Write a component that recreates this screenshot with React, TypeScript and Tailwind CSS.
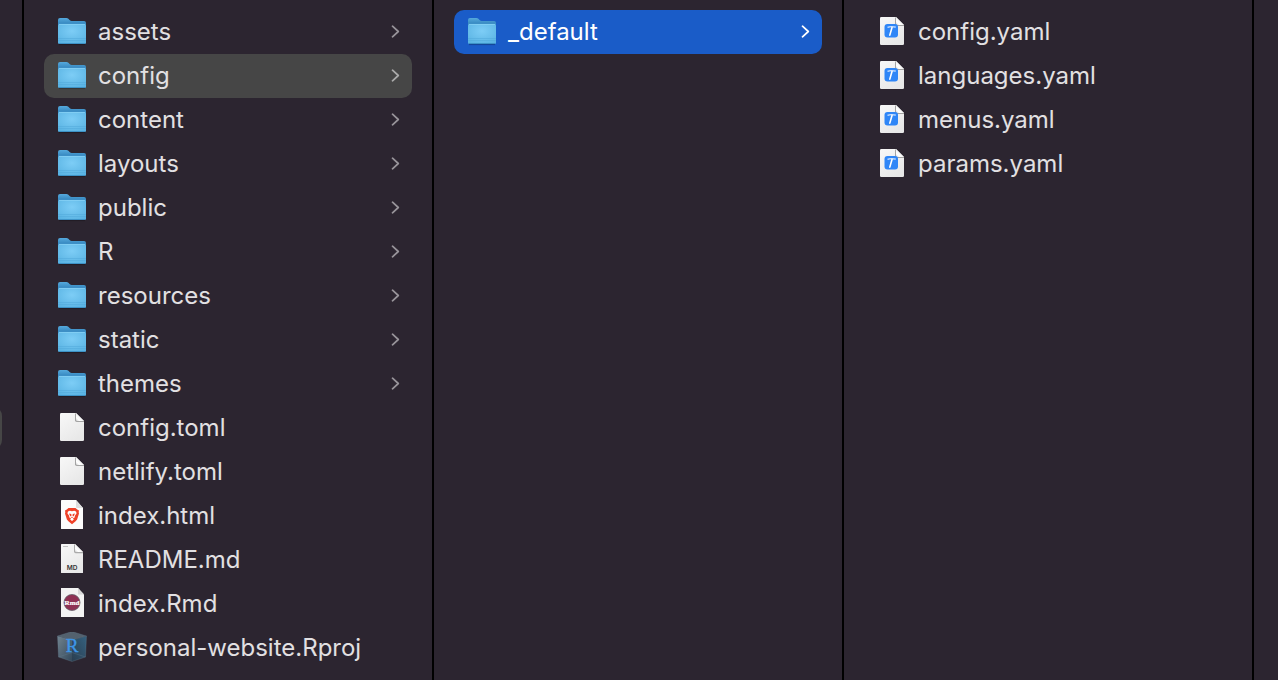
import React from "react";

type Kind = "folder" | "doc" | "brave" | "md" | "rmd" | "rproj" | "yaml";
type Entry = { name: string; kind: Kind };
type State = "none" | "path" | "active";

const root: Entry[] = [
  { name: "assets", kind: "folder" },
  { name: "config", kind: "folder" },
  { name: "content", kind: "folder" },
  { name: "layouts", kind: "folder" },
  { name: "public", kind: "folder" },
  { name: "R", kind: "folder" },
  { name: "resources", kind: "folder" },
  { name: "static", kind: "folder" },
  { name: "themes", kind: "folder" },
  { name: "config.toml", kind: "doc" },
  { name: "netlify.toml", kind: "doc" },
  { name: "index.html", kind: "brave" },
  { name: "README.md", kind: "md" },
  { name: "index.Rmd", kind: "rmd" },
  { name: "personal-website.Rproj", kind: "rproj" },
];

const configDir: Entry[] = [{ name: "_default", kind: "folder" }];

const defaultDir: Entry[] = [
  { name: "config.yaml", kind: "yaml" },
  { name: "languages.yaml", kind: "yaml" },
  { name: "menus.yaml", kind: "yaml" },
  { name: "params.yaml", kind: "yaml" },
];

function Gradients() {
  return (
    <svg className="absolute size-0" aria-hidden="true">
      <defs>
        <radialGradient id="folderFront" cx="0.5" cy="0.35" r="0.75">
          <stop offset="0" stopColor="#7dcdf6" />
          <stop offset="1" stopColor="#58b2e2" />
        </radialGradient>
        <linearGradient id="folderBack" x1="0" y1="0" x2="0" y2="1">
          <stop offset="0" stopColor="#55a9dc" />
          <stop offset="0.3" stopColor="#3d8fc6" />
        </linearGradient>
        <linearGradient id="paper" x1="0" y1="0" x2="0.6" y2="1">
          <stop offset="0" stopColor="#f8f8f8" />
          <stop offset="1" stopColor="#e8e8e8" />
        </linearGradient>
        <linearGradient id="fold" x1="0" y1="1" x2="0.5" y2="0.5">
          <stop offset="0" stopColor="#cfcfcf" />
          <stop offset="0.5" stopColor="#ffffff" />
          <stop offset="1" stopColor="#f4f4f4" />
        </linearGradient>
        <linearGradient id="cubeLeft" x1="0" y1="0" x2="1" y2="1">
          <stop offset="0" stopColor="#71838f" />
          <stop offset="1" stopColor="#33485a" />
        </linearGradient>
        <linearGradient id="cubeRight" x1="1" y1="0" x2="0" y2="1">
          <stop offset="0" stopColor="#35617f" />
          <stop offset="1" stopColor="#2a3e50" />
        </linearGradient>
      </defs>
    </svg>
  );
}

function Folder() {
  return (
    <>
      <path d="M3 28.6h26" stroke="#000" strokeOpacity="0.25" />
      <path d="M2 4Q2 2 4 2h6.4q1.2 0 2 .8l1.2 1.2q1 1 2 1H28q2 0 2 2v10H2z" fill="url(#folderBack)" />
      <path d="M2 9.6Q2 8 3.6 8h24.8Q30 8 30 9.6v16.9Q30 28 28.5 28h-25Q2 28 2 26.5z" fill="url(#folderFront)" />
      <path d="M3 8.5h26" stroke="#8fd7f8" strokeOpacity="0.6" />
      <path d="M2 22.5h28M2 24.5h28" stroke="#4fa8da" strokeOpacity="0.5" />
      <path d="M3 27.5h26" stroke="#3d92c6" />
    </>
  );
}

function Sheet({ narrow = false }: { narrow?: boolean }) {
  return narrow ? (
    <>
      <path d="M5 .6Q5 0 5.6 0H19l8 8v20.4q0 .6-.6.6H5.6Q5 29 5 28.4z" fill="url(#paper)" />
      <path d="M18 1v6.5Q18 9.2 19.7 9.2H27v-1L19 0z" fill="#7c7c7c" fillOpacity="0.6" />
      <path d="M19 0v7q0 1 1 1h7z" fill="url(#fold)" />
    </>
  ) : (
    <>
      <path d="M4 2.3Q4 1 5.3 1H20l8 8v18.7q0 1.3-1.3 1.3H5.3Q4 29 4 27.7z" fill="url(#paper)" />
      <path d="M19 2v6.2Q19 10 20.8 10H28V9l-8-8z" fill="#707070" fillOpacity="0.6" />
      <path d="M20 1v6.8Q20 9 21.2 9H28z" fill="url(#fold)" />
    </>
  );
}

function Brave() {
  return (
    <>
      <path d="M5 .6Q5 0 5.6 0H20l7 8v20.4q0 .6-.6.6H5.6Q5 29 5 28.4z" fill="#fcfcfc" />
      <path d="M20 0v7q0 1 1 1h6z" fill="#dedede" />
      <path d="M12.5 8h7l1.700 1.500 1.800 1-.3 1.800.3 1.300-1.900 6-1.500 1.700L16 24.300l-3.600-3-1.500-1.700-1.900-6 .3-1.300-.3-1.800 1.800-1z" fill="#ee4128" />
      <path d="M12 11.500l1.800-.8 2.200.6 2.200-.6 1.800.8.600 1.700-1.900 2.800.2 1.200-1.900 1.100.8 1.200L16 21l-1.800-1.500.8-1.200-1.900-1.100.2-1.200-1.900-2.800z" fill="#fff" />
      <path d="M13 13.500l2.300.5.2 2.200-1.200.1zM19 13.500l-2.300.5-.2 2.200 1.200.1zM14.700 17h2.600L16 18z" fill="#ee4128" />
    </>
  );
}

function Art({ kind }: { kind: Kind }) {
  switch (kind) {
    case "folder":
      return <Folder />;
    case "doc":
      return <Sheet />;
    case "brave":
      return <Brave />;
    case "md":
      return (
        <>
          <Sheet narrow />
          <path d="M7 2.5h5" stroke="#b5b5b5" strokeWidth="0.8" />
          <text x="16" y="26" textAnchor="middle" fontSize="6.5" fontWeight="600" fill="#333" fontFamily="Inter, sans-serif">MD</text>
        </>
      );
    case "rmd":
      return (
        <>
          <path d="M5 0h17l6 6.5V29H5z" fill="#f3f3f3" />
          <path d="M22 0v6.5h6z" fill="#d8d8d8" />
          <circle cx="16" cy="14.5" r="8" fill="#8f3154" stroke="#63606a" strokeWidth="0.8" />
          <text x="16" y="17" textAnchor="middle" fontSize="7" fontWeight="700" fill="#fff" stroke="#fff" strokeWidth="0.2" fontFamily="Liberation Serif, serif">Rmd</text>
        </>
      );
    case "rproj":
      return (
        <>
          <path d="M1.5 4L16 8v21.5L2.5 25z" fill="url(#cubeLeft)" />
          <path d="M30.5 4L16 8v21.5L29.5 25z" fill="url(#cubeRight)" />
          <path d="M16-.5L30.5 4 16 8 1.5 4z" fill="#53616e" />
          <path d="M1.5 4L16 8l14.5-4M16-.5L30.5 4l-1 21L16 29.5 2.5 25l-1-21zM2.5 25L16 20.5 29.5 25" fill="none" stroke="#688394" strokeOpacity="0.5" strokeWidth="0.6" />
          <text x="16" y="20" textAnchor="middle" fontSize="19" fill="#3e96e8" stroke="#3e96e8" strokeWidth="0.4" fontFamily="Liberation Serif, serif">R</text>
        </>
      );
    case "yaml":
      return (
        <>
          <Sheet />
          <rect x="8.5" y="8" width="13.5" height="13.5" rx="3" fill="#2f86f7" />
          <path d="M11.5 11.4q3.500-1.600 8.300-.2" fill="none" stroke="#cfe3fd" strokeWidth="1.3" />
          <path d="M16 11.500l-2.200 7.600" stroke="#fff" strokeWidth="1.6" strokeLinecap="round" />
        </>
      );
  }
}

function Row({ entry, state }: { entry: Entry; state: State }) {
  const tone =
    state === "active" ? "bg-[#1a5cc8] text-white" : state === "path" ? "bg-[#464646] text-[#e2e0e2]" : "text-[#e2e0e2]";
  return (
    <li>
      <button type="button" className={`flex h-11 w-full items-center gap-2.5 rounded-[10px] px-3 text-left ${tone}`}>
        <svg viewBox="0 0 32 32" className="size-8 shrink-0" aria-hidden="true">
          <Art kind={entry.kind} />
        </svg>
        <span className="min-w-0 flex-1 whitespace-nowrap">{entry.name}</span>
        {entry.kind === "folder" && (
          <svg
            viewBox="0 0 10 14"
            className={`h-3.5 w-2.5 shrink-0 ${state === "active" ? "text-white" : state === "path" ? "text-[#aaaaaa]" : "text-[#98949a]"}`}
            fill="none"
            stroke="currentColor"
            strokeWidth="1.7"
            strokeLinecap="round"
            strokeLinejoin="round"
            aria-hidden="true"
          >
            <path d="M2.5 1.2L8.3 6.5l-5.8 5.3" />
          </svg>
        )}
      </button>
    </li>
  );
}

function Column({ label, entries, selected, active = false }: { label: string; entries: Entry[]; selected?: string; active?: boolean }) {
  return (
    <ul aria-label={label} className="min-w-0 border-r-2 border-black px-5 py-2.5">
      {entries.map((entry) => (
        <Row key={entry.name} entry={entry} state={entry.name !== selected ? "none" : active ? "active" : "path"} />
      ))}
    </ul>
  );
}

export default function App() {
  return (
    <main className="grid min-h-screen grid-cols-[24px_1fr_1fr_1fr_24px] overflow-hidden bg-[#2c2530] font-['Inter',sans-serif] text-2xl">
      <Gradients />
      <div className="overflow-hidden border-r-2 border-black pt-[406px]">
        <div className="-ml-5 h-11 w-[22px] rounded-r-[10px] bg-[#464646]" />
      </div>
      <Column label="personal-website" entries={root} selected="config" />
      <Column label="config" entries={configDir} selected="_default" active />
      <Column label="_default" entries={defaultDir} />
    </main>
  );
}
